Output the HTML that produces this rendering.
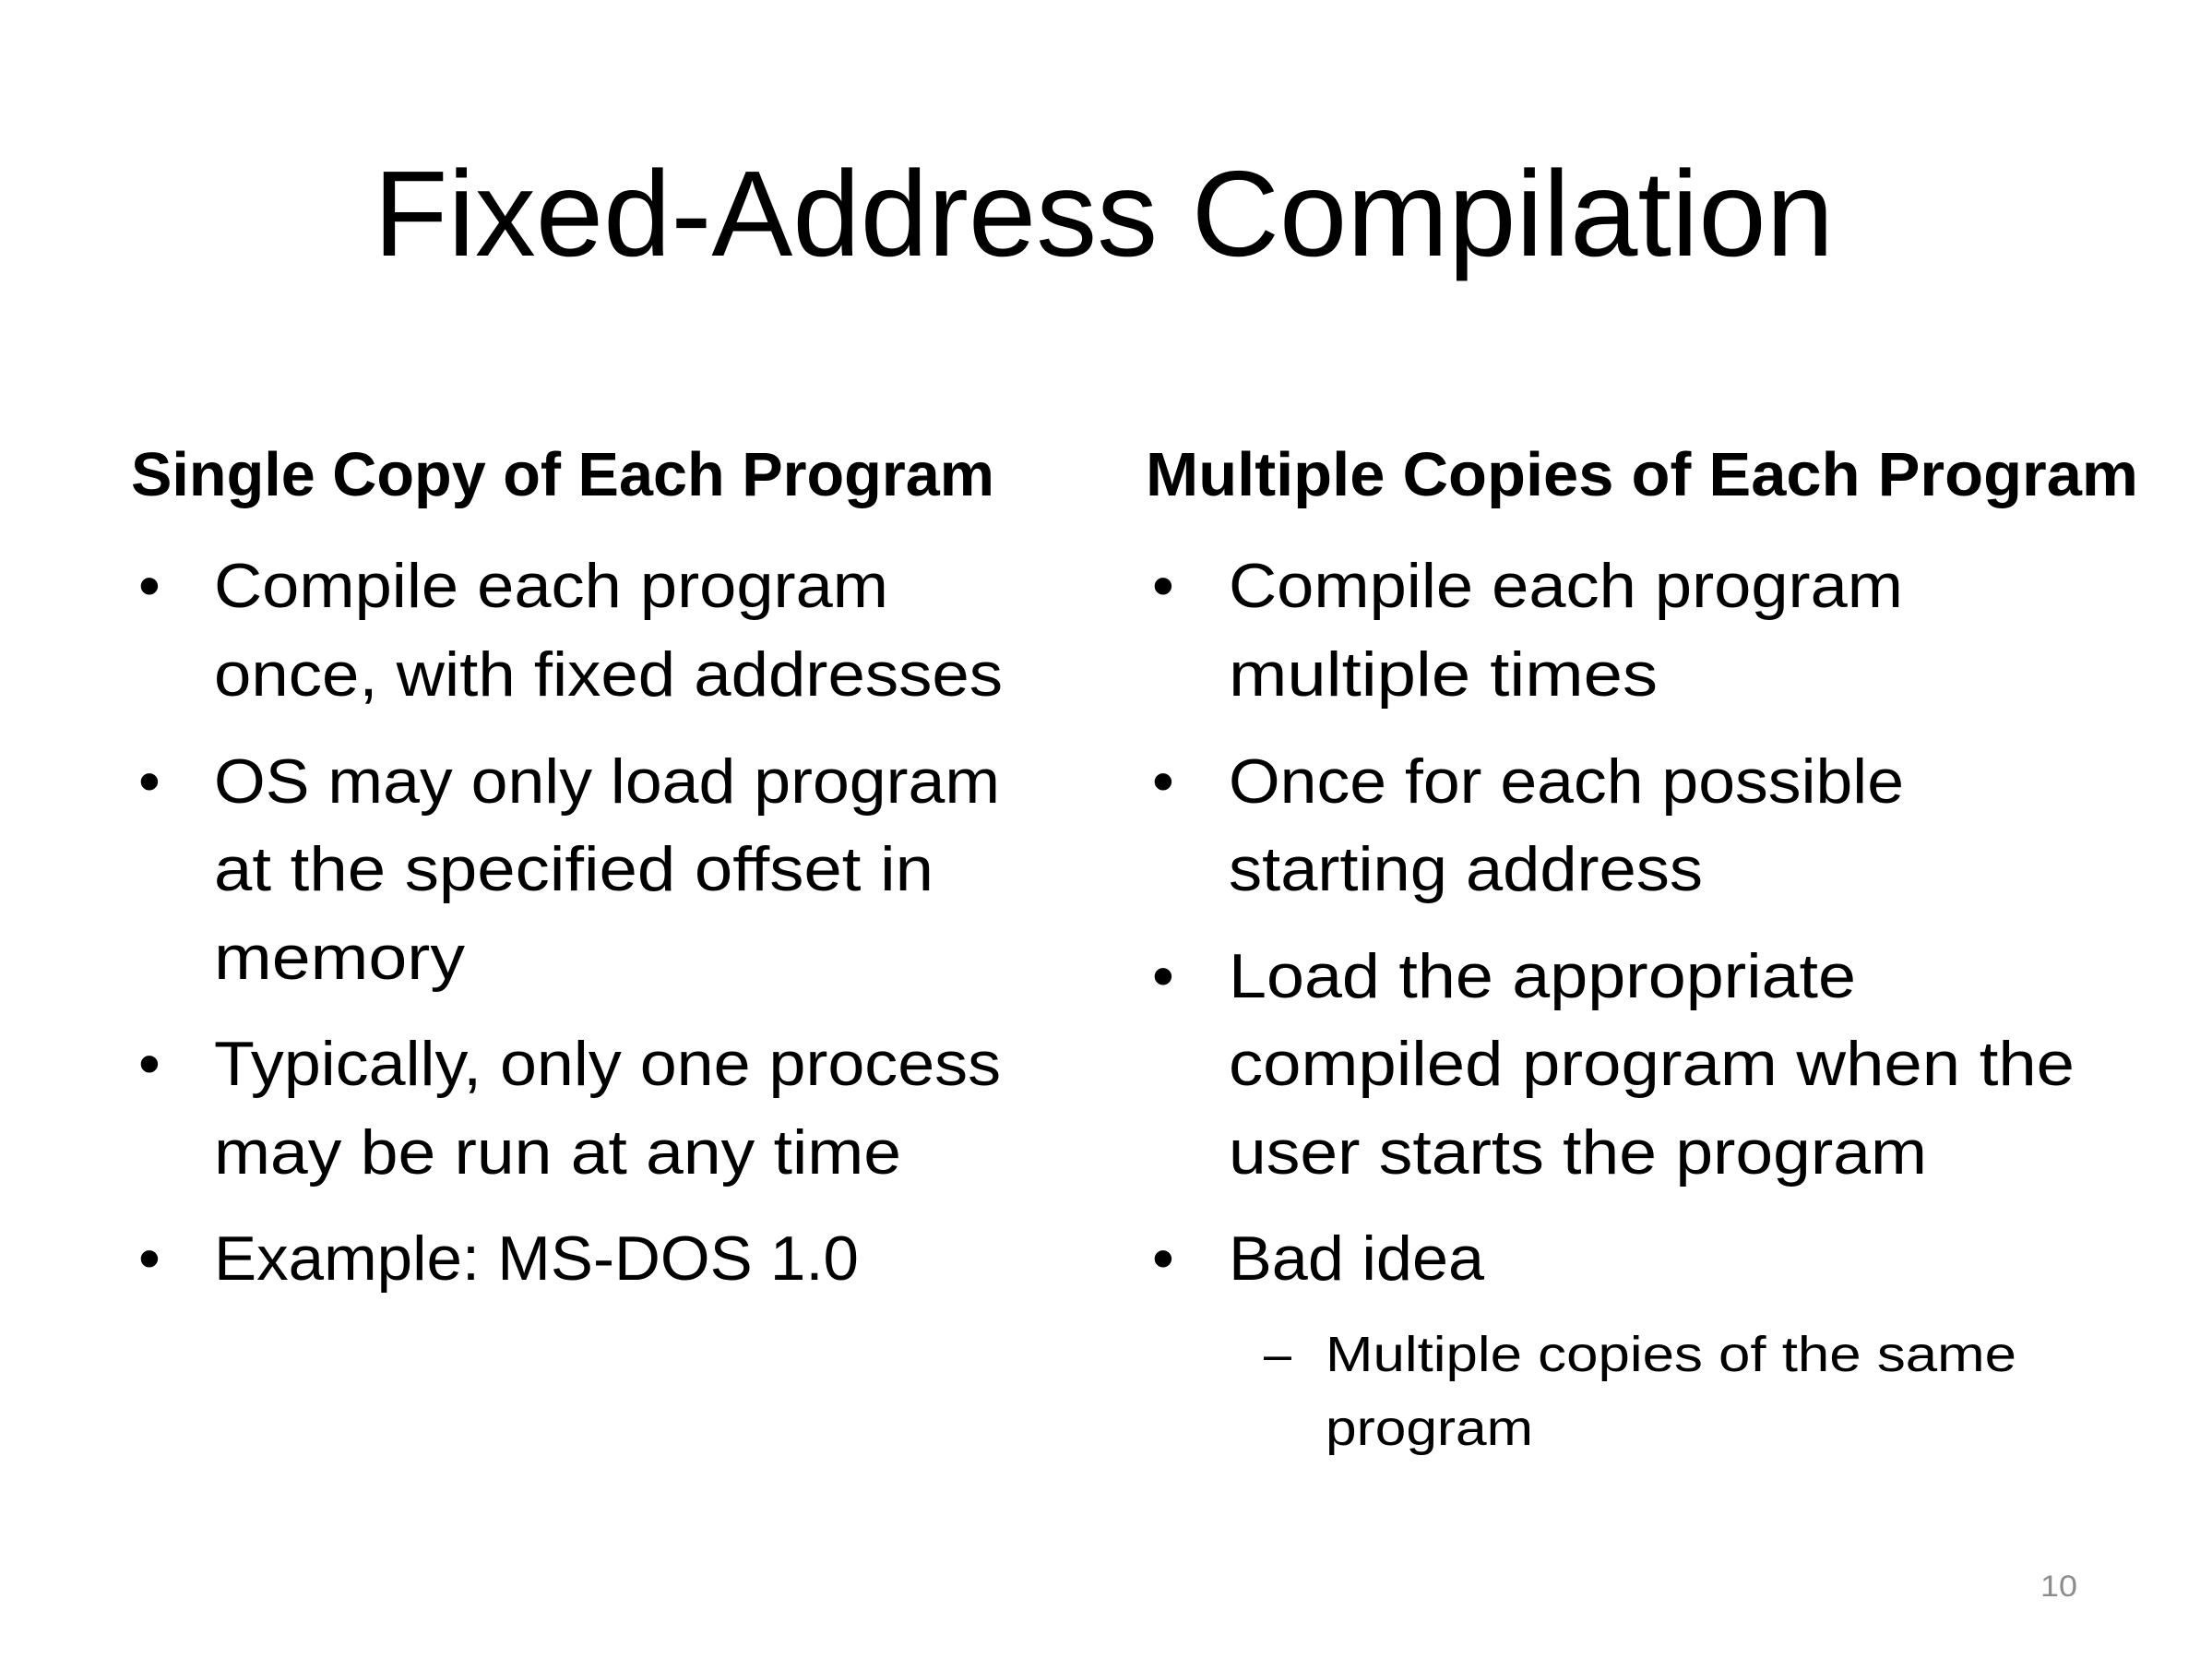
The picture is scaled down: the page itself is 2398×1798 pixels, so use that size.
<!DOCTYPE html>
<html><head><meta charset="utf-8"><style>
html,body{margin:0;padding:0;background:#fff;}
svg{display:block;}
text{font-family:"Liberation Sans",sans-serif;fill:#000;}
</style></head><body>
<svg width="2398" height="1798" viewBox="0 0 2398 1798" xmlns="http://www.w3.org/2000/svg">
<rect width="2398" height="1798" fill="#fff"/>
<text x="405" y="277" font-size="132" textLength="1583" lengthAdjust="spacingAndGlyphs">Fixed-Address Compilation</text>

<text x="142" y="537" font-size="67" font-weight="bold" textLength="936" lengthAdjust="spacingAndGlyphs">Single Copy of Each Program</text>
<text x="1242" y="537" font-size="67" font-weight="bold" textLength="1076" lengthAdjust="spacingAndGlyphs">Multiple Copies of Each Program</text>

<g font-size="68">
<text x="150" y="658">•</text>
<text x="232" y="658" textLength="731" lengthAdjust="spacingAndGlyphs">Compile each program</text>
<text x="232" y="754" textLength="855" lengthAdjust="spacingAndGlyphs">once, with fixed addresses</text>
<text x="150" y="870">•</text>
<text x="232" y="870" textLength="852" lengthAdjust="spacingAndGlyphs">OS may only load program</text>
<text x="232" y="965" textLength="780" lengthAdjust="spacingAndGlyphs">at the specified offset in</text>
<text x="232" y="1061" textLength="272" lengthAdjust="spacingAndGlyphs">memory</text>
<text x="150" y="1176">•</text>
<text x="232" y="1176" textLength="853" lengthAdjust="spacingAndGlyphs">Typically, only one process</text>
<text x="232" y="1272" textLength="745" lengthAdjust="spacingAndGlyphs">may be run at any time</text>
<text x="150" y="1387">•</text>
<text x="232" y="1387" textLength="699" lengthAdjust="spacingAndGlyphs">Example: MS-DOS 1.0</text>

<text x="1249" y="658">•</text>
<text x="1332" y="658" textLength="731" lengthAdjust="spacingAndGlyphs">Compile each program</text>
<text x="1332" y="754" textLength="465" lengthAdjust="spacingAndGlyphs">multiple times</text>
<text x="1249" y="870">•</text>
<text x="1332" y="870" textLength="732" lengthAdjust="spacingAndGlyphs">Once for each possible</text>
<text x="1332" y="965" textLength="514" lengthAdjust="spacingAndGlyphs">starting address</text>
<text x="1249" y="1081">•</text>
<text x="1332" y="1081" textLength="680" lengthAdjust="spacingAndGlyphs">Load the appropriate</text>
<text x="1332" y="1176" textLength="917" lengthAdjust="spacingAndGlyphs">compiled program when the</text>
<text x="1332" y="1272" textLength="757" lengthAdjust="spacingAndGlyphs">user starts the program</text>
<text x="1249" y="1387">•</text>
<text x="1332" y="1387" textLength="277" lengthAdjust="spacingAndGlyphs">Bad idea</text>
</g>
<g font-size="54">
<text x="1370" y="1486" textLength="30" lengthAdjust="spacingAndGlyphs">–</text>
<text x="1437" y="1486" textLength="749" lengthAdjust="spacingAndGlyphs">Multiple copies of the same</text>
<text x="1437" y="1566" textLength="225" lengthAdjust="spacingAndGlyphs">program</text>
</g>
<text x="2212" y="1730" font-size="32" style="fill:#8c8c8c" textLength="40" lengthAdjust="spacingAndGlyphs">10</text>
</svg>
</body></html>
